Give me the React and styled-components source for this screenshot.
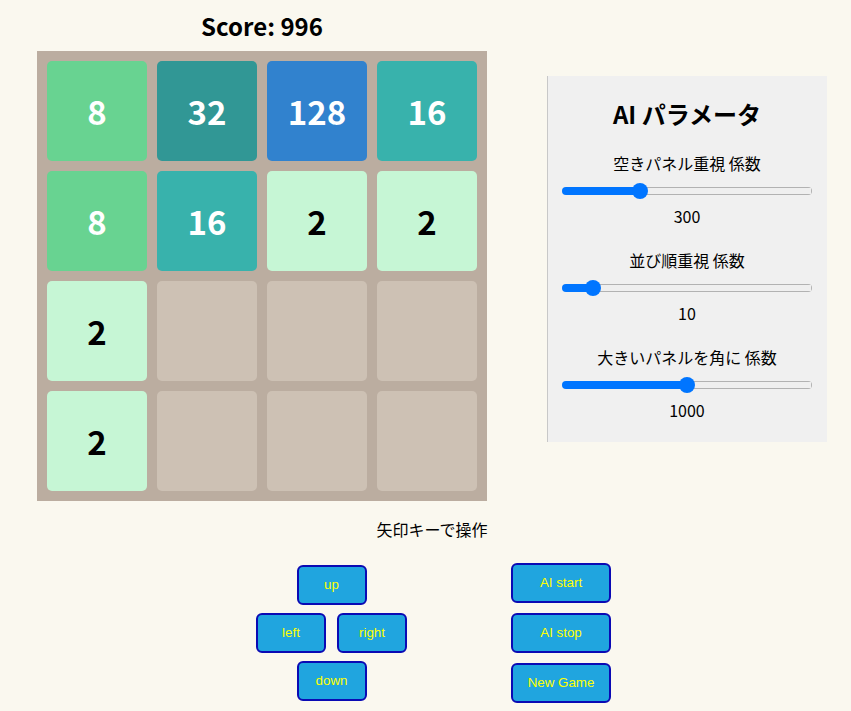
import React from "react";
import styled, { createGlobalStyle } from "styled-components";

const GlobalStyle = createGlobalStyle`
  html, body {
    margin: 0;
    padding: 0;
    background: #faf8ef;
    font-family: "Noto Sans CJK JP", "Noto Sans", sans-serif;
    color: #000;
  }
`;

const Page = styled.div`
  width: 790px;
  margin-left: 37px;
  display: flex;
  flex-direction: column;
`;

const TopRow = styled.div`
  display: flex;
  align-items: flex-start;
  gap: 60px;
`;

const GameColumn = styled.div`
  display: flex;
  flex-direction: column;
  width: 450px;
`;

const Score = styled.h2`
  margin: 0;
  height: 51px;
  font-size: 24px;
  font-weight: 700;
  line-height: 51px;
  text-align: center;
`;

const Board = styled.div`
  box-sizing: border-box;
  width: 450px;
  height: 450px;
  padding: 10px;
  background: #bbada0;
  display: grid;
  grid-template-columns: repeat(4, 100px);
  grid-template-rows: repeat(4, 100px);
  gap: 10px;
`;

const tileColors = {
  0: "#cdc1b4",
  2: "#c6f6d5",
  4: "#9ae6b4",
  8: "#68d391",
  16: "#38b2ac",
  32: "#319795",
  64: "#2c7a7b",
  128: "#3182ce",
};

const Tile = styled.div`
  border-radius: 5px;
  background: ${(p) => tileColors[p.$v] || "#2b6cb0"};
  color: ${(p) => (p.$v <= 4 ? "#000" : "#fff")};
  display: flex;
  align-items: center;
  justify-content: center;
  font-size: 33px;
  font-weight: 700;
`;

const Panel = styled.div`
  box-sizing: border-box;
  width: 280px;
  margin-top: 76px;
  background: #f0f0f0;
  border-left: 1px solid #c8c8c8;
  padding: 20px 15px 20px 14px;
  display: flex;
  flex-direction: column;
  gap: 20px;
`;

const PanelTitle = styled.h3`
  margin: 0 0 -1px;
  font-size: 24px;
  font-weight: 700;
  line-height: 36px;
  text-align: center;
`;

const Param = styled.div`
  display: flex;
  flex-direction: column;
  align-items: center;
`;

const ParamLabel = styled.div`
  font-size: 16px;
  line-height: 24px;
`;

const ParamValue = styled.div`
  font-size: 16px;
  line-height: 24px;
`;

const Slider = styled.input`
  -webkit-appearance: none;
  appearance: none;
  width: 250px;
  height: 16px;
  margin: 8px 0 5px;
  padding: 0;
  background: transparent;
  cursor: pointer;

  &::-webkit-slider-runnable-track {
    height: 8px;
    border-radius: 4px;
    background:
      linear-gradient(to right, #0075ff 0, #0075ff var(--fill), transparent var(--fill)),
      linear-gradient(#efefef, #efefef) center / calc(100% - 2px) calc(100% - 2px) no-repeat,
      #b2b2b2;
  }

  &::-webkit-slider-thumb {
    -webkit-appearance: none;
    appearance: none;
    width: 16px;
    height: 16px;
    margin-top: -4px;
    border: none;
    border-radius: 50%;
    background: #0075ff;
  }
`;

const Hint = styled.div`
  margin-top: 16px;
  font-size: 16px;
  line-height: 24px;
  text-align: center;
`;

const Controls = styled.div`
  margin-top: 22px;
  display: flex;
  justify-content: center;
  align-items: flex-start;
  gap: 104px;
  padding-left: 3px;
`;

const Pad = styled.div`
  margin-top: 2px;
  display: grid;
  grid-template-columns: 70px 70px;
  column-gap: 11px;
  row-gap: 8px;
`;

const PadRow = styled.div`
  grid-column: 1 / 3;
  display: flex;
  justify-content: center;
`;

const AiColumn = styled.div`
  display: flex;
  flex-direction: column;
  gap: 10px;
`;

const Btn = styled.button`
  box-sizing: border-box;
  width: ${(p) => (p.$wide ? "100px" : "70px")};
  height: 40px;
  padding: 0 0 1px;
  background: #20a5df;
  border: 2px solid #0a0ab4;
  border-radius: 6px;
  color: #ffff00;
  font-family: "Liberation Sans", Arial, sans-serif;
  font-size: 13.333px;
  cursor: pointer;
`;

const board = [
  [8, 32, 128, 16],
  [8, 16, 2, 2],
  [2, 0, 0, 0],
  [2, 0, 0, 0],
];

const params = [
  { label: "空きパネル重視 係数", value: 300, max: 1000 },
  { label: "並び順重視 係数", value: 10, max: 100 },
  { label: "大きいパネルを角に 係数", value: 1000, max: 2000 },
];

export default function App() {
  return (
    <>
      <GlobalStyle />
      <Page>
        <TopRow>
          <GameColumn>
            <Score>Score: 996</Score>
            <Board>
              {board.flat().map((v, i) => (
                <Tile key={i} $v={v}>
                  {v ? v : ""}
                </Tile>
              ))}
            </Board>
          </GameColumn>
          <Panel>
            <PanelTitle>AI パラメータ</PanelTitle>
            {params.map((p) => (
              <Param key={p.label}>
                <ParamLabel>{p.label}</ParamLabel>
                <Slider
                  type="range"
                  min={0}
                  max={p.max}
                  defaultValue={p.value}
                  style={{ "--fill": `${8 + (p.value / p.max) * 234}px` }}
                />
                <ParamValue>{p.value}</ParamValue>
              </Param>
            ))}
          </Panel>
        </TopRow>
        <Hint>矢印キーで操作</Hint>
        <Controls>
          <Pad>
            <PadRow>
              <Btn>up</Btn>
            </PadRow>
            <Btn>left</Btn>
            <Btn>right</Btn>
            <PadRow>
              <Btn>down</Btn>
            </PadRow>
          </Pad>
          <AiColumn>
            <Btn $wide>AI start</Btn>
            <Btn $wide>AI stop</Btn>
            <Btn $wide>New Game</Btn>
          </AiColumn>
        </Controls>
      </Page>
    </>
  );
}
